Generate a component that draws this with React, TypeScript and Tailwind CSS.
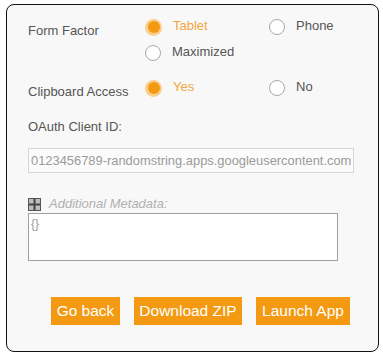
import React from 'react';

type Option = { label: string; checked?: boolean };

function Radio({ checked }: { checked?: boolean }) {
  if (checked) {
    return (
      <span className="flex h-[17px] w-[17px] shrink-0 items-center justify-center rounded-full bg-[#f9cf8f]">
        <span className="h-[12px] w-[12px] rounded-full bg-[#f39a12]" />
      </span>
    );
  }
  return <span className="h-[16px] w-[16px] shrink-0 rounded-full border-[1.5px] border-[#a8a8a8] bg-white" />;
}

function RadioOption({ label, checked }: Option) {
  return (
    <div className="flex h-[20px] items-center">
      <Radio checked={checked} />
      <span className={`ml-[11px] -mt-[3px] ${checked ? 'text-[#f0a63c]' : 'text-[#555]'}`}>{label}</span>
    </div>
  );
}

function RadioRow({ label, options }: { label: string; options: Option[] }) {
  return (
    <div className="grid grid-cols-[117px_124px_1fr] gap-y-[6px]">
      <div className="row-span-2 pt-[4px] text-[#555]">{label}</div>
      {options.map((o) => (
        <RadioOption key={o.label} {...o} />
      ))}
    </div>
  );
}

const buttons = [
  { label: 'Go back', w: 'w-[69px]' },
  { label: 'Download ZIP', w: 'w-[108px]' },
  { label: 'Launch App', w: 'w-[94px]' },
];

export default function App() {
  return (
    <div className="h-[357px] w-[383px] bg-white pl-[6px] pt-[4px] text-[13px]" style={{ fontFamily: '"Liberation Sans", Arial, sans-serif' }}>
      <div className="flex h-[348px] w-[373px] flex-col rounded-[8px] border border-[#111] bg-[#f8f8f8] pl-[21px] pt-[12px]">
        <RadioRow
          label="Form Factor"
          options={[{ label: 'Tablet', checked: true }, { label: 'Phone' }, { label: 'Maximized' }]}
        />
        <div className="mt-[15px]">
          <RadioRow label="Clipboard Access" options={[{ label: 'Yes', checked: true }, { label: 'No' }]} />
        </div>

        <div className="mt-[13px] leading-[20px] text-[#555]">OAuth Client ID:</div>

        <div className="mt-[11px] flex h-[25px] w-[326px] items-center overflow-hidden whitespace-nowrap border border-[#d6d6d6] bg-[#fbfbfb] pl-[2px] text-[12.9px] text-[#9a9a9a]">
          0123456789-randomstring.apps.googleusercontent.com
        </div>

        <div className="mt-[24px] flex h-[14px] items-center">
          <svg width="13" height="13" viewBox="0 0 13 13">
            <rect x="0.5" y="0.5" width="12" height="12" fill="#bdbdbd" stroke="#555" />
            <path d="M6.5 1v11M1 6.5h11" stroke="#444" strokeWidth="2" />
          </svg>
          <span className="ml-[8px] italic text-[#b0b0b0]">Additional Metadata:</span>
        </div>

        <div className="mt-[2px] h-[48px] w-[310px] border border-[#a0a0a0] bg-white pl-[2px] pt-[1px] text-[12px] text-[#999]">
          {'{}'}
        </div>

        <div className="mt-[36px] flex gap-[14px] pl-[23px]">
          {buttons.map((b) => (
            <button key={b.label} className={`h-[28px] ${b.w} bg-[#f39a12] text-[15.5px] text-white`}>
              {b.label}
            </button>
          ))}
        </div>
      </div>
    </div>
  );
}
